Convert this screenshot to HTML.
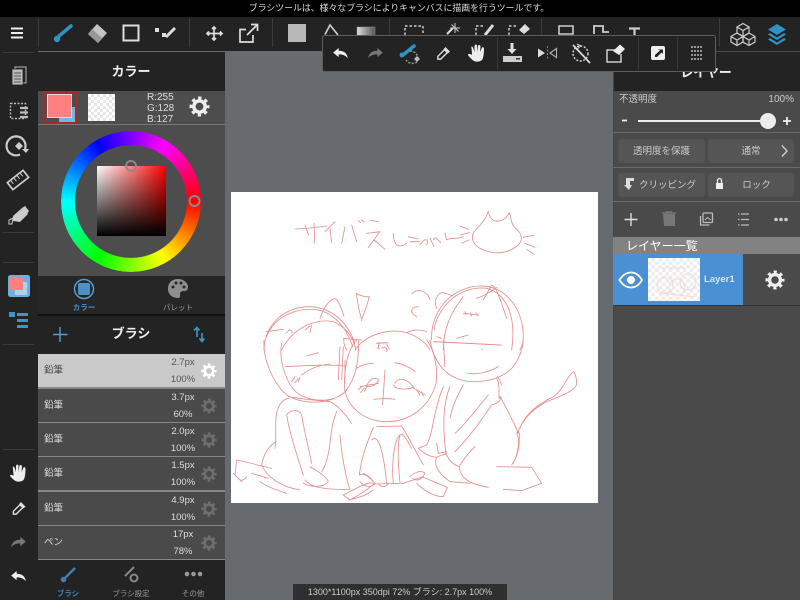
<!DOCTYPE html>
<html lang="ja"><head><meta charset="utf-8"><title>MediBang</title>
<style>
html,body{margin:0;padding:0;background:#000;overflow:hidden}
#p{position:relative;width:800px;height:600px;overflow:hidden;background:#676a6f;font-family:"Liberation Sans","Noto Sans CJK JP",sans-serif;color:#ddd;filter:blur(.35px)}
.a{position:absolute}
.t{position:absolute;white-space:nowrap;line-height:1}
.c{transform:translateX(-50%)}
.r{position:absolute;left:38px;width:187px;height:33px;background:#4a4a4a}
.r.s{background:#c9c9c9}
.btn{position:absolute;background:#555;border-radius:4px;height:26px}
svg{position:absolute;left:0;top:0}
</style></head><body><div id="p">
<div class="a" style="left:0;top:0;width:800px;height:17px;background:#000"></div>
<div class="t c" style="left:399px;top:4px;font-size:8.9px;color:#ddd">ブラシツールは、様々なブラシによりキャンバスに描画を行うツールです。</div>
<div class="a" style="left:0;top:17px;width:800px;height:34px;background:#232323"></div>
<div class="a" style="left:0;top:51px;width:38px;height:549px;background:#232323"></div>
<div class="a" style="left:38px;top:52px;width:187px;height:39px;background:#232323"></div>
<div class="a" style="left:38px;top:91px;width:187px;height:33px;background:#4d4d4d"></div>
<div class="a" style="left:38px;top:125px;width:187px;height:151px;background:#4d4d4d"></div>
<div class="a" style="left:38px;top:124px;width:187px;height:1px;background:#777"></div>
<div class="a" style="left:38px;top:276px;width:187px;height:38px;background:#262626"></div>
<div class="a" style="left:38px;top:314px;width:187px;height:2px;background:#111"></div>
<div class="a" style="left:38px;top:316px;width:187px;height:38px;background:#232323"></div>
<div class="a" style="left:38px;top:354px;width:187px;height:206px;background:#888"></div>
<div class="a" style="left:38px;top:560px;width:187px;height:40px;background:#232323"></div>
<div class="a" style="left:613px;top:51px;width:187px;height:549px;background:#4a4a4a"></div>
<div class="a" style="left:613px;top:52px;width:187px;height:39px;background:#232323"></div>
<div class="a" style="left:613px;top:51px;width:1px;height:549px;background:#444"></div>

<!-- canvas -->
<div class="a" style="left:231px;top:192px;width:367px;height:311px;background:#fff"></div>
<svg width="800" height="600" viewBox="0 0 800 600" fill="none" stroke="#e68c8c" stroke-width="2.5" stroke-linecap="round" stroke-linejoin="round">
<g transform="translate(230 190) scale(.3333)">
<path d="M195 117C225 116 262 112 290 108M252 100L254 160M225 105C228 115 232 125 236 135M315 95L285 125M300 115L305 158M345 110L335 160M365 105L380 155M385 92L392 98M395 90L402 96M420 90L445 95M410 130L450 125L415 172M432 150L465 178M490 130C490 170 510 175 530 160M535 140L565 147M540 155L570 155M570 165C585 140 600 148 590 165M600 145L612 170M610 150C615 135 625 150 632 158M645 128L650 150C665 140 680 150 700 140M690 108L716 118M692 135L718 128M695 160L716 150"/>
<path d="M730 130C740 110 760 105 775 65C780 85 790 98 812 92C825 88 835 75 838 68C845 85 842 105 860 118C875 130 880 150 865 165C840 185 820 190 790 188C755 182 735 170 728 150C726 140 728 135 730 130M880 142L912 136M885 160L915 172M890 178L912 193"/>
<path d="M378 310C395 318 408 322 418 320C412 345 402 370 394 392M380 312C382 340 388 365 394 385M545 312C560 295 590 300 600 328M565 350C545 350 535 365 560 380"/>
<path d="M102 480C105 400 165 350 240 350C300 352 350 390 375 460M110 440C130 385 190 355 250 358C300 362 345 400 368 470M155 480C190 410 260 385 310 395C345 410 370 440 378 480M108 425L160 418M170 428C180 415 190 420 185 430M270 385C285 340 310 320 320 328C330 340 335 360 342 378M340 445L395 450M342 445C340 460 345 470 350 480M375 480C410 430 480 415 530 428C565 440 590 460 600 480M530 428C550 418 575 418 590 425M620 355C610 330 625 305 640 308L670 318M760 330L785 285C800 290 815 340 830 385M740 325C770 315 790 300 800 292M605 450C600 370 660 290 750 288C820 285 880 350 880 440C880 460 875 470 870 480M612 420C625 340 700 285 770 295C830 310 860 380 845 480M640 480C640 420 660 370 700 320M700 370L745 375M610 455L815 465M620 440L635 445M680 445L715 435M440 460L475 458M443 475L448 462M470 462L478 478"/>
<path d="M705 365L708 375M722 368L725 378M738 368L744 378M225 420L240 408M245 405L240 428"/>
</g>
<g transform="translate(230 340) scale(.3333)">
<path d="M102 0C98 60 130 130 170 165C220 195 300 195 345 155C375 120 388 70 385 0M155 10C145 60 170 140 210 165C260 190 320 185 350 150M165 80C220 78 280 72 345 78M215 105C240 85 270 75 300 72M230 48L265 38M185 125L195 110M195 128L205 115M205 125L210 112M325 120L330 20M335 120L340 20M345 130L345 60"/>
<path d="M380 0C350 30 340 100 345 155C360 210 410 245 470 245C540 245 600 200 618 130C625 80 612 30 590 0M380 85C395 75 415 70 430 70M495 68C520 72 545 85 555 95M465 90L458 195M432 178C455 175 475 175 495 178M410 140C415 120 430 110 445 118C445 130 430 140 410 140M390 140L445 130M385 150L395 140M392 158L402 145M402 155L410 142M495 130C505 110 530 115 552 142C530 150 500 150 490 135M548 142L585 165M560 150L570 165M575 155L580 168M440 10L465 8M455 25C465 20 475 25 470 35M445 15L447 28"/>
<path d="M600 0C610 60 640 100 680 115C730 135 810 125 850 80C868 55 878 25 880 0M640 0L645 80M615 5L810 15M715 100C745 105 780 95 805 80M755 28L757 30M800 115C815 135 800 190 812 170C830 210 850 240 865 280M803 108L815 135"/>
<path d="M175 175C155 180 140 200 138 235C135 260 140 290 135 325M175 170C200 175 250 180 300 185C330 200 350 230 365 250M320 215C310 240 305 260 300 310C295 350 285 380 275 395M170 225C180 210 205 205 215 225C220 260 235 320 245 370M170 225C175 260 195 330 220 405M330 285C335 340 345 400 358 445M138 305C115 320 100 345 95 375C110 410 150 440 210 450M20 360C50 365 90 378 125 385M20 360L15 405C30 425 40 425 50 410M65 400L115 415M90 425C110 440 140 450 170 460M10 400L35 425M240 380C265 395 290 410 295 425C285 440 250 445 220 430M225 420C240 440 275 450 360 448"/>
<path d="M430 262C415 300 395 345 388 405M440 260L515 258C535 290 560 340 580 375M425 300C445 280 460 330 470 430M490 430C485 380 490 300 510 285C520 275 535 310 545 325M510 285C500 320 505 380 510 428M390 405C405 395 425 420 435 430C425 445 400 440 390 425M400 400C410 405 420 410 430 425M445 432C455 445 470 440 475 430M435 432L520 430M340 465C380 445 420 420 432 432C410 450 390 465 360 480L340 465M355 480C385 475 410 465 430 450M520 430L580 410M540 410C555 395 575 390 585 400C575 420 560 425 548 415M575 410L652 442L640 470C610 470 580 450 560 430"/>
<path d="M640 140C610 210 610 280 590 315L565 325C580 340 600 350 620 352C630 345 645 345 650 340M660 140C635 200 640 280 648 340C660 370 680 378 688 380C690 410 710 430 775 442M700 135C680 170 665 205 660 235M775 165C745 200 705 255 675 280M810 170C815 180 805 190 785 195C755 240 720 290 675 335M735 320C710 345 695 365 688 380M620 310L625 340L650 335M620 352C610 375 625 400 660 425L720 430M820 448L875 452L935 430L905 382L800 380M845 375C855 360 870 340 868 280C862 270 860 275 862 285C870 300 865 340 850 370"/>
<path d="M862 280C880 235 905 210 950 185C1000 165 1040 150 1040 130C1040 115 1035 95 1030 95C1010 110 1000 150 970 170C930 190 885 220 870 265"/>
</g>
</svg>

<!-- floating status -->
<div class="a" style="left:293px;top:584px;width:214px;height:16px;background:#2e2f31"></div>
<div class="t c" style="left:400px;top:588px;font-size:9px;color:#ccc">1300*1100px 350dpi 72% ブラシ: 2.7px 100%</div>

<!-- left colour row -->
<div class="a" style="left:59px;top:107px;width:16px;height:16px;background:#6bb8e0"></div>
<div class="a" style="left:47px;top:94px;width:25px;height:24px;background:#ff807f;border:.5px solid #ddd;box-sizing:border-box"></div>
<div class="a" style="left:43px;top:91px;width:35px;height:33px;box-sizing:border-box;border:2px solid #a52a2a"></div>
<div class="a" style="left:88px;top:94px;width:27px;height:27px;background-color:#fff;background-image:conic-gradient(#e6e6e6 25%,#fff 0 50%,#e6e6e6 0 75%,#fff 0);background-size:6px 6px"></div>
<div class="t" style="left:147px;top:92px;font-size:10px;line-height:11px;white-space:pre;color:#ddd">R:255
G:128
B:127</div>

<!-- wheel -->
<div class="a" style="left:61px;top:131px;width:140px;height:141px;border-radius:50%;background:conic-gradient(from 90deg,#f00,#ff0,#0f0,#0ff,#00f,#f0f,#f00);-webkit-mask:radial-gradient(closest-side,transparent 79.5%,#000 80.5%);mask:radial-gradient(closest-side,transparent 79.5%,#000 80.5%)"></div>
<div class="a" style="left:97px;top:166px;width:69px;height:70px;background:linear-gradient(to bottom,transparent,#000),linear-gradient(to right,#fff,#f00)"></div>

<div class="t c" style="left:131px;top:65px;font-size:13px;font-weight:bold;color:#eee">カラー</div>
<div class="t c" style="left:84px;top:304px;font-size:7.5px;color:#4e8fc4;font-weight:bold">カラー</div>
<div class="t c" style="left:178px;top:304px;font-size:7.5px;color:#999">パレット</div>
<div class="t c" style="left:131px;top:327px;font-size:13px;font-weight:bold;color:#eee">ブラシ</div>

<!-- brush rows -->
<div class="r s" style="top:354px"></div>
<div class="r" style="top:389px"></div>
<div class="r" style="top:423px"></div>
<div class="r" style="top:457px"></div>
<div class="r" style="top:492px"></div>
<div class="r" style="top:526px"></div>
<div class="t" style="left:44px;top:366px;font-size:9.5px;color:#444">鉛筆</div>
<div class="t" style="left:44px;top:401px;font-size:9.5px">鉛筆</div>
<div class="t" style="left:44px;top:435px;font-size:9.5px">鉛筆</div>
<div class="t" style="left:44px;top:469px;font-size:9.5px">鉛筆</div>
<div class="t" style="left:44px;top:504px;font-size:9.5px">鉛筆</div>
<div class="t" style="left:44px;top:538px;font-size:9.5px">ペン</div>
<div class="t c" style="left:183px;top:358px;font-size:9.5px;color:#555">2.7px</div><div class="t c" style="left:183px;top:375px;font-size:9.5px;color:#555">100%</div>
<div class="t c" style="left:183px;top:393px;font-size:9.5px">3.7px</div><div class="t c" style="left:183px;top:410px;font-size:9.5px">60%</div>
<div class="t c" style="left:183px;top:427px;font-size:9.5px">2.0px</div><div class="t c" style="left:183px;top:444px;font-size:9.5px">100%</div>
<div class="t c" style="left:183px;top:461px;font-size:9.5px">1.5px</div><div class="t c" style="left:183px;top:478px;font-size:9.5px">100%</div>
<div class="t c" style="left:183px;top:496px;font-size:9.5px">4.9px</div><div class="t c" style="left:183px;top:513px;font-size:9.5px">100%</div>
<div class="t c" style="left:183px;top:530px;font-size:9.5px">17px</div><div class="t c" style="left:183px;top:547px;font-size:9.5px">78%</div>

<div class="t c" style="left:68px;top:590px;font-size:7.5px;color:#3f7fb5;font-weight:bold">ブラシ</div>
<div class="t c" style="left:131px;top:590px;font-size:7.5px;color:#999">ブラシ設定</div>
<div class="t c" style="left:193px;top:590px;font-size:7.5px;color:#999">その他</div>

<!-- right panel -->
<div class="t c" style="left:706px;top:66px;font-size:13px;font-weight:bold;color:#eee">レイヤー</div>
<div class="t" style="left:619px;top:95px;font-size:9.5px;color:#ccc">不透明度</div>
<div class="t" style="right:6px;top:95px;font-size:10px;color:#ccc">100%</div>
<div class="a" style="left:613px;top:132px;width:187px;height:1px;background:#6a6a6a"></div>
<div class="a" style="left:613px;top:167px;width:187px;height:1px;background:#6a6a6a"></div>
<div class="a" style="left:613px;top:201px;width:187px;height:1px;background:#6a6a6a"></div>
<div class="a" style="left:638px;top:120px;width:122px;height:2px;background:#eee"></div>
<div class="a" style="left:760px;top:113px;width:16px;height:16px;border-radius:50%;background:#eee"></div>
<div class="btn" style="left:618px;top:139px;width:87px;height:24px"></div>
<div class="btn" style="left:708px;top:139px;width:86px;height:24px"></div>
<div class="btn" style="left:618px;top:173px;width:87px;height:24px"></div>
<div class="btn" style="left:708px;top:173px;width:86px;height:24px"></div>
<div class="t c" style="left:661.5px;top:147px;font-size:9.5px;color:#ccc">透明度を保護</div>
<div class="t c" style="left:751px;top:147px;font-size:9.5px;color:#ccc">通常</div>
<div class="t" style="left:639px;top:181px;font-size:9.5px;color:#ccc">クリッピング</div>
<div class="t c" style="left:756.5px;top:181px;font-size:9.5px;color:#ccc">ロック</div>
<div class="a" style="left:613px;top:237px;width:187px;height:17px;background:#828282"></div>
<div class="t" style="left:626px;top:240px;font-size:12px;color:#fff">レイヤー一覧</div>
<div class="a" style="left:613px;top:254px;width:130px;height:51px;background:#4a90d2"></div>
<div class="a" style="left:648px;top:258px;width:52px;height:43px;background-color:#fff;background-image:conic-gradient(#ececec 25%,#fff 0 50%,#ececec 0 75%,#fff 0);background-size:7px 7px"></div>
<div class="t" style="left:704px;top:275px;font-size:9.5px;font-weight:bold;color:#d0e3f5">Layer1</div>
<div class="a" style="left:613px;top:305px;width:187px;height:1px;background:#333"></div>

<!-- icons -->
<svg width="800" height="600" viewBox="0 0 800 600" fill="none" stroke="none">
<defs>
<symbol id="g" viewBox="0 0 24 24" overflow="visible"><circle cx="12" cy="12" r="6.5" fill="none" stroke="currentColor" stroke-width="4"/><circle cx="12" cy="12" r="9.7" fill="none" stroke="currentColor" stroke-width="3.4" stroke-dasharray="3.8 3.82" stroke-dashoffset="1.9"/></symbol>
<symbol id="undo" viewBox="0 0 16 12"><path d="M0 5L6 0V3C11 3 15 5 16 11C13 8 10 7 6 7V10Z" fill="currentColor"/></symbol>
<symbol id="drop" viewBox="0 0 16 16" overflow="visible"><path d="M2 11L9 4L12 7L5 14L2 14Z" fill="none" stroke="currentColor" stroke-width="1.5"/><path d="M10 1L15 6L12.500 8L8 3.500Z" fill="currentColor"/></symbol>
<linearGradient id="gr"><stop offset="0" stop-color="#ddd"/><stop offset="1" stop-color="#555"/></linearGradient>
</defs>
<!-- thumbnail scribble -->
<g stroke="#f6d2d2" stroke-width=".8"><circle cx="665" cy="285" r="8"/><circle cx="677" cy="287" r="8"/><circle cx="688" cy="282" r="8"/><path d="M662 268H685M660 293L695 297"/></g>
<!-- top bar seps -->
<g stroke="#3b3b3b" stroke-width="1"><path d="M38.500 18V47M189.500 18V47M272.500 18V47M389.500 18V47M541.500 18V47M719.500 18V47"/></g>
<g stroke="#3b3b3b"><path d="M3 52.500H34M3 232.500H34M3 262.500H34M3 344.500H34M3 449.500H34"/></g>
<!-- hamburger -->
<path d="M11 28.500H23M11 33H23M11 37.500H23" stroke="#eee" stroke-width="2"/>
<!-- brush -->
<path d="M71 26L59 36" stroke="#2f93c4" stroke-width="3.500" stroke-linecap="round"/><circle cx="57" cy="39" r="3.200" fill="#2f93c4"/>
<!-- eraser -->
<path d="M97 24L107 33L98 43L88 34Z" fill="#c4c4c4"/><path d="M92 29L102 38L98 43L88 34Z" fill="#999"/>
<!-- rect -->
<rect x="123.500" y="25.500" width="15" height="15" stroke="#ddd" stroke-width="2"/>
<!-- poly -->
<g fill="#ddd"><rect x="155" y="28" width="4" height="4"/><rect x="162" y="33" width="4" height="4"/></g><path d="M166 37L175 28" stroke="#ddd" stroke-width="3"/>
<!-- move -->
<path d="M214 27V40M207 33.500H222M212 29L214 27L216 29M212 38L214 40L216 38M209 31.500L207 33.500L209 35.500M220 31.500L222 33.500L220 35.500" stroke="#ddd" stroke-width="1.700"/>
<!-- transform -->
<path d="M246 29.500H240V42H253V35M247 35L257 25M251 24.500H257.500V31" stroke="#ddd" stroke-width="1.700"/>
<rect x="288" y="24" width="18" height="18" fill="#b8b8b8"/>
<!-- bucket & gradient -->
<path d="M325 34.500L330 25L338 35" stroke="#ccc" stroke-width="1.700"/>
<rect x="357" y="27" width="18" height="10" fill="url(#gr)" stroke="#999" stroke-width=".5"/>
<!-- selection tools -->
<g stroke="#ccc" stroke-width="1.500" stroke-dasharray="2.500 2"><path d="M405 35V26H423V35M476 35V26H484M509 35V26H516"/></g>
<path d="M447 34L453 28" stroke="#ddd" stroke-width="2"/><path d="M455 23V33M450 28H460M451.500 24.500L458.500 31.500" stroke="#ccc"/>
<path d="M485 35L493 25" stroke="#ddd" stroke-width="3"/><path d="M519 30L525 24L530 29L524 34Z" fill="#ddd"/>
<!-- frame, page, T -->
<path d="M559 26H573V34H559ZM558 38H575" stroke="#ccc" stroke-width="1.600"/>
<path d="M594 34V26H603V32H609" stroke="#ccc" stroke-width="1.800"/>
<path d="M629 28.500H640M634.500 28.500V38" stroke="#ccc" stroke-width="2.200"/>
<!-- cubes -->
<g stroke="#ccc" stroke-width="1.200"><path d="M743 23.500L749 27V33L743 36.500L737 33V27ZM737 27L743 30.500L749 27M743 30.500V36.500"/><path d="M737 33L743 36.500V42L737 45.500L731 42V36.500ZM731 36.500L737 40L743 36.500M737 40V45.500"/><path d="M749 33L755 36.500V42L749 45.500L743 42V36.500ZM743 36.500L749 40L755 36.500M749 40V45.500"/></g>
<!-- layers -->
<g fill="#2f93c4"><path d="M777 24L786 29.500L777 35L768 29.500Z"/><path d="M770 33L777 37.500L784 33L786 34.500L777 40L768 34.500Z"/><path d="M770 38L777 42.500L784 38L786 39.500L777 45L768 39.500Z"/></g>

<!-- floating toolbar -->
<rect x="322.500" y="35.500" width="393" height="36" rx="2" fill="#232323" stroke="#5d5d5d"/>
<path d="M497.500 37V70M638.500 37V70M677.500 37V70" stroke="#383838"/>
<use href="#undo" x="333" y="48" width="15" height="11" color="#eee"/>
<g transform="translate(383 48) scale(-1 1)"><use href="#undo" width="15" height="11" color="#777"/></g>
<path d="M414 46L403 55" stroke="#2f93c4" stroke-width="3.500" stroke-linecap="round"/><circle cx="402" cy="55" r="2.500" fill="#2f93c4"/>
<path d="M410 51A8 8 0 0 1 418 58M417 62A8 8 0 0 1 406 60" stroke="#999" stroke-width="1.500" stroke-dasharray="2 1.500"/><path d="M414 59L417 56L420 59L417 62Z" fill="#bbb"/>
<use href="#drop" x="436" y="46" width="15" height="15" color="#ddd"/>
<path d="M472 55C472 50 471 47 471.500 46.500C473 46 474 50 474.500 52V46C475 44 477 44 477 46V52L478 45.500C479 44.500 480.500 45 480.500 46.500L480 52L482 47.500C483 46.500 484 47.500 484 49C484 53 483.500 58 482 60C480 62 476 62 474 61C472.500 60 470 58 468 55C468 53.500 470 53.500 472 55Z" fill="#eee"/>
<path d="M512 43V50" stroke="#ddd" stroke-width="3"/><path d="M507.500 49H516.500L512 54Z" fill="#ddd"/><rect x="503" y="56" width="19" height="6" fill="#ccc"/><rect x="516" y="58" width="4" height="1.500" fill="#333"/>
<path d="M538 48.500L545 53L538 57.500Z" fill="#ddd"/><path d="M547.500 46V60" stroke="#888" stroke-dasharray="2 1.500"/><path d="M556.500 48.500L550 53L556.500 57.500Z" stroke="#aaa" stroke-width="1.200"/>
<circle cx="580.500" cy="53.500" r="7.500" stroke="#ccc" stroke-width="1.500" stroke-dasharray="2 1.500"/><path d="M573 45L590 63" stroke="#ddd" stroke-width="1.700"/><path d="M577 44L581 46L577 49" stroke="#ccc"/>
<path d="M616 50H607V62H621V54" stroke="#ccc" stroke-width="1.500"/><path d="M613 51L620 44.500L625 49L619 55Z" fill="#eee"/>
<rect x="651" y="46" width="14" height="14" rx="2" fill="#eee"/><path d="M655 57V55L660 50.500L658 49.500H663V54L661.500 52.500L657 57Z" fill="#232323"/>
<g fill="#bbb"><circle cx="692" cy="47" r="1"/><circle cx="695" cy="47" r="1"/><circle cx="698" cy="47" r="1"/><circle cx="701" cy="47" r="1"/><circle cx="692" cy="51" r="1"/><circle cx="695" cy="51" r="1"/><circle cx="698" cy="51" r="1"/><circle cx="701" cy="51" r="1"/><circle cx="692" cy="55" r="1"/><circle cx="695" cy="55" r="1"/><circle cx="698" cy="55" r="1"/><circle cx="701" cy="55" r="1"/><circle cx="692" cy="59" r="1"/><circle cx="695" cy="59" r="1"/><circle cx="698" cy="59" r="1"/><circle cx="701" cy="59" r="1"/></g>

<!-- sidebar icons -->
<rect x="15" y="67" width="11" height="16" fill="#232323" stroke="#bbb"/>
<rect x="12" y="69" width="11" height="16" fill="#bbb" stroke="#232323" stroke-width=".8"/><path d="M14 73H21M14 76H21M14 79H21M14 82H21" stroke="#555"/>
<rect x="10.500" y="103.500" width="15" height="15" stroke="#bbb" stroke-width="1.400" stroke-dasharray="2 1.500"/><path d="M20 108H28M20 112.500H28M20 117H28" stroke="#bbb" stroke-width="2.300"/>
<path d="M25 149A9.500 9.500 0 1 0 20 154.500" stroke="#ccc" stroke-width="2.200"/><path d="M22 149H29L26 153Z" fill="#ccc"/><path d="M19 142L23 146L19 150L15 146Z" fill="#ccc"/>
<g transform="rotate(-38 18 180)"><rect x="8" y="175.500" width="20" height="9" stroke="#ccc" stroke-width="1.700"/><path d="M12 176V180M16 176V180M20 176V180M24 176V180" stroke="#ccc"/></g>
<path d="M13 216L22 208L28 214L20 222L13 221Z" fill="#ccc"/><path d="M22 208L25 206L29 211L27 214Z" fill="#ccc"/><path d="M9 220L13 218L12 224L9 224Z" stroke="#ccc"/>
<rect x="8" y="275" width="22" height="22" rx="2.500" fill="#6bb0e0"/><rect x="15" y="282" width="12" height="13" fill="#a8d4ee"/><rect x="10" y="277" width="13" height="13" rx="1" fill="#ff807f"/>
<g fill="#3b97c8"><rect x="9" y="312" width="6" height="5"/><rect x="17" y="313" width="11" height="3"/><rect x="17" y="319" width="11" height="3"/><rect x="17" y="325" width="11" height="3"/></g>
<path d="M13.500 476C13.500 471 12.500 467 13 466.500C14.500 466 15.500 470 16 472V466C16.500 464 18.500 464 18.500 466V472L19.500 465.500C20.500 464.500 22 465 22 466.500L21.500 472L23.500 467.500C24.500 466.500 25.500 467.500 25.500 469C25.500 473 25 478 23.500 480C21.500 482 17.500 482 15.500 481C14 480 11.500 478 10 476C10 474.500 12 474.500 13.500 476Z" fill="#eee"/>
<use href="#drop" x="11.500" y="501" width="15" height="15" color="#ddd"/>
<g transform="translate(26 537) scale(-1 1)"><use href="#undo" width="15" height="11" color="#777"/></g>
<use href="#undo" x="11" y="571" width="15" height="11" color="#eee"/>

<!-- gears -->
<use href="#g" x="189" y="96" width="21" height="21" color="#eee"/>
<use href="#g" x="201" y="363" width="16" height="16" color="#fff"/>
<use href="#g" x="201" y="398" width="16" height="16" color="#6e6e6e"/>
<use href="#g" x="201" y="432" width="16" height="16" color="#6e6e6e"/>
<use href="#g" x="201" y="466" width="16" height="16" color="#6e6e6e"/>
<use href="#g" x="201" y="501" width="16" height="16" color="#6e6e6e"/>
<use href="#g" x="201" y="535" width="16" height="16" color="#6e6e6e"/>
<use href="#g" x="765" y="270" width="20" height="20" color="#eee"/>

<!-- wheel handles -->
<circle cx="131" cy="166" r="5" stroke="#8a8a8a" stroke-width="2"/>
<circle cx="194.500" cy="201" r="5" stroke="#8a8a8a" stroke-width="2"/>

<!-- colour tabs -->
<circle cx="84" cy="289" r="9.500" stroke="#5b9bd0" stroke-width="1.500"/><rect x="78" y="283" width="12" height="12" rx="2" fill="#4e8fc4"/>
<path d="M178 279C170 279 168 285 168 289C168 295 173 298 178 298C181 298 180 295 180 294C180 291 183 291 185 291C187 291 188 289 188 286C187 282 183 279 178 279Z" fill="#8f8f8f"/>
<g fill="#262626"><circle cx="173" cy="287" r="1.500"/><circle cx="176" cy="283" r="1.500"/><circle cx="181" cy="283" r="1.500"/><circle cx="184" cy="287" r="1.500"/></g>
<!-- brush header -->
<path d="M60 327V342M53 334.500H67.500" stroke="#5b9bd0" stroke-width="1.400"/>
<path d="M197 328V337M194 330.500L197 327.500L199.500 330.500M202 333V341.500M199.500 338.500L202 341.500L204.500 338.500" stroke="#3b97c8" stroke-width="1.600"/>
<!-- bottom tabs -->
<path d="M75 568L65 578" stroke="#3f7fb5" stroke-width="2.500"/><circle cx="63.500" cy="579.500" r="2.800" fill="#3f7fb5"/>
<path d="M134 567L125 576" stroke="#888" stroke-width="2"/><circle cx="134" cy="578" r="3.500" stroke="#888" stroke-width="2"/>
<g fill="#999"><circle cx="187" cy="574" r="2.300"/><circle cx="193.500" cy="574" r="2.300"/><circle cx="200" cy="574" r="2.300"/></g>

<!-- right icons -->
<path d="M622 120.500H627" stroke="#eee" stroke-width="1.800"/>
<path d="M783 121H791M787 117V125" stroke="#eee" stroke-width="1.800"/>
<path d="M782 145.500L787 151L782 156.500" stroke="#ccc" stroke-width="1.400"/>
<path d="M626 178V185L624 185L629 190L632 185H630V181H634V178Z" fill="#ddd"/>
<rect x="716" y="183" width="7" height="6" fill="#eee"/><path d="M717.500 183V180.500A2 2 0 0 1 721.500 180.500V183" stroke="#eee" stroke-width="1.300"/>
<path d="M631 213V226M624.500 219.500H637.500" stroke="#ddd" stroke-width="1.400"/>
<path d="M663 214H675V226H664Z" fill="#777"/><path d="M662 213H676M666 212H672" stroke="#777" stroke-width="1.500"/>
<rect x="703" y="213" width="9.500" height="9.500" rx="1" stroke="#bbb" stroke-width="1.300"/><path d="M700.500 216V225H709.500" stroke="#bbb" stroke-width="1.300"/><path d="M705 220L707.500 217.500L711 220" stroke="#bbb"/>
<path d="M741 214H749M741 219.500H749M741 225H749" stroke="#bbb" stroke-width="1.200"/><path d="M738 214H739.500M738 219.500H739.500M738 225H739.500" stroke="#bbb" stroke-width="1.200"/>
<g fill="#ccc"><circle cx="776" cy="219.500" r="1.800"/><circle cx="781" cy="219.500" r="1.800"/><circle cx="786" cy="219.500" r="1.800"/></g>
<path d="M619.500 280C623 274.500 627 272.500 631 272.500C635 272.500 639 274.500 642 280C639 285.500 635 287.500 631 287.500C627 287.500 623 285.500 619.500 280Z" stroke="#fff" stroke-width="1.800"/><circle cx="631" cy="280" r="4" fill="#fff"/>
</svg>
</div></body></html>
